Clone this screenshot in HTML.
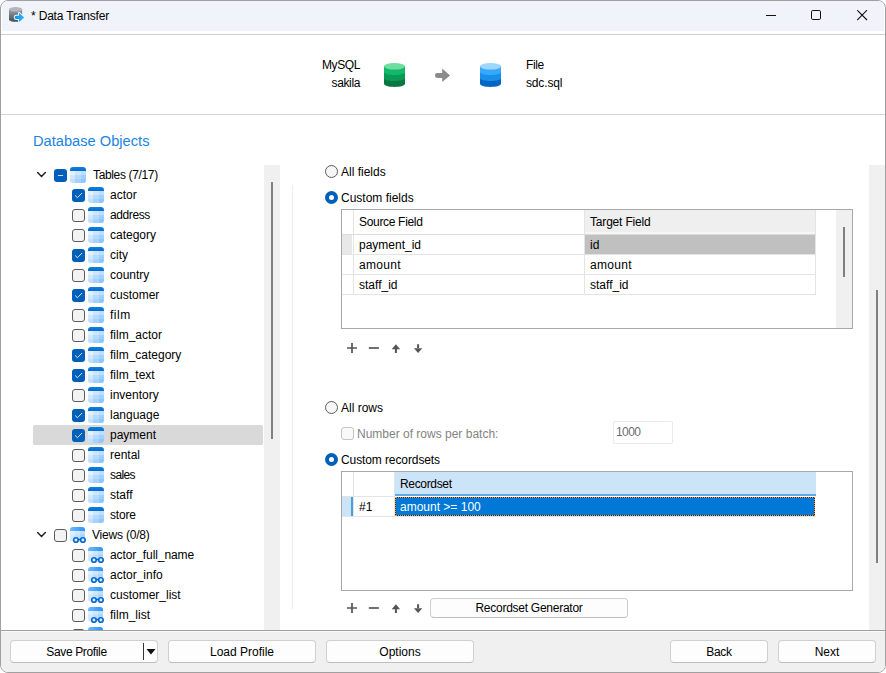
<!DOCTYPE html>
<html><head><meta charset="utf-8"><title>Data Transfer</title>
<style>
html,body{margin:0;padding:0;}
body{width:886px;height:673px;overflow:hidden;background:#fff;font-family:"Liberation Sans",sans-serif;font-size:12px;color:#000;position:relative;}
#win{position:absolute;left:0;top:0;width:884px;height:671px;border:1px solid #a0a0a0;border-radius:8px;overflow:hidden;background:#fff;}
#inner{position:absolute;left:-1px;top:-1px;width:886px;height:673px;}
#inner *{position:absolute;box-sizing:border-box;}
#title{left:2px;top:1px;width:882px;height:30px;background:#f0f3f9;}
.tx{height:20px;line-height:20px;white-space:nowrap;}
.cb{width:13px;height:13px;border:1px solid #5c5c5c;border-radius:3px;background:#f3f3f3;}
.cb.on{border:0;background:#005fb8;}
.cb svg{left:0;top:0;}
.sel{left:33px;width:230px;height:20px;background:#d9d9d9;border-radius:2px;}
.rad{width:13px;height:13px;border:1px solid #5c5c5c;border-radius:50%;background:#f6f6f6;}
.rad.on{border:4px solid #005fb8;background:#fff;}
.btn{height:23px;border:1px solid #d0d0d0;border-radius:4px;background:#fdfdfd;text-align:center;line-height:22px;font-size:12px;border-bottom-color:#bdbdbd;}
.gl{background:#e4e4e4;}
.tool{font-size:14px;color:#444;}
</style></head><body>
<svg width="0" height="0" style="position:absolute">
<defs>
<linearGradient id="hd" x1="0" y1="0" x2="0" y2="1"><stop offset="0" stop-color="#0f80de"/><stop offset="1" stop-color="#066ccc"/></linearGradient>
<clipPath id="rc"><rect x="0" y="0" width="16" height="16" rx="3.2"/></clipPath>
<g id="tbl" clip-path="url(#rc)">
<rect x="0" y="0" width="16" height="16" fill="#e3f1ff"/>
<rect x="5" y="4" width="6" height="12" fill="#cde6ff"/>
<rect x="11" y="4" width="5" height="12" fill="#bcdeff"/>
<rect x="0" y="8" width="5" height="4" fill="#cfe7ff"/>
<rect x="5" y="8" width="6" height="4" fill="#b5daff"/>
<rect x="11" y="8" width="5" height="4" fill="#a0d0ff"/>
<rect x="0" y="12" width="5" height="4" fill="#c0e0ff"/>
<rect x="5" y="12" width="6" height="4" fill="#a5d3ff"/>
<rect x="11" y="12" width="5" height="4" fill="#8cc8ff"/>
<rect x="0" y="0" width="16" height="4" fill="url(#hd)"/>
</g>
<linearGradient id="hv" x1="0" y1="0" x2="1" y2="0"><stop offset="0" stop-color="#6cb8ff"/><stop offset="1" stop-color="#2a92f8"/></linearGradient>
<clipPath id="rv"><rect x="0" y="0" width="15" height="14.5" rx="3"/></clipPath>
<g id="vw">
<g clip-path="url(#rv)">
<rect x="0" y="0" width="15" height="15" fill="#e0f0ff"/>
<rect x="5" y="4" width="5" height="11" fill="#cfe7ff"/>
<rect x="10" y="4" width="5" height="11" fill="#bfdfff"/>
<rect x="0" y="7.5" width="5" height="7" fill="#d3e9ff"/>
<rect x="5" y="7.5" width="5" height="7" fill="#c0e0ff"/>
<rect x="10" y="7.5" width="5" height="7" fill="#aad5ff"/>
<rect x="0" y="0" width="15" height="4" fill="url(#hv)"/>
</g>
<circle cx="5.95" cy="13" r="2.25" fill="#dbeeff" stroke="#0a6cd0" stroke-width="1.7"/>
<circle cx="12.9" cy="13" r="2.25" fill="#dbeeff" stroke="#0a6cd0" stroke-width="1.7"/>
<path d="M8.2 12.5 H10.7" stroke="#0a5cb8" stroke-width="1.3"/>
</g>
</defs></svg>
<div id="win"><div id="inner">
<div id="title"></div>
<!-- title icon -->
<svg style="left:8px;top:6px" width="18" height="18" viewBox="0 0 18 18">
<defs><linearGradient id="cyl" x1="0" y1="0" x2="0" y2="1"><stop offset="0" stop-color="#9da2a8"/><stop offset="0.45" stop-color="#737a81"/><stop offset="1" stop-color="#474d53"/></linearGradient>
<linearGradient id="arw" x1="0" y1="0" x2="1" y2="0"><stop offset="0" stop-color="#0a8eea"/><stop offset="1" stop-color="#34bbff"/></linearGradient></defs>
<path d="M1 3.3 V13.5 C1 14.9 4 15.8 7.6 15.8 S14.2 14.9 14.2 13.5 V3.3 Z" fill="url(#cyl)"/>
<ellipse cx="7.6" cy="3.3" rx="6.6" ry="2.3" fill="#b3b6bb"/>
<path d="M8.3 9.7 H10.9 V6.8 L16.3 11.4 L10.9 16.1 V13 H8.3 A1.65 1.65 0 0 1 8.3 9.7 Z" fill="#f0f3f9" stroke="#f0f3f9" stroke-width="1.8" stroke-linejoin="round"/>
<path d="M8.3 9.7 H10.9 V6.8 L16.3 11.4 L10.9 16.1 V13 H8.3 A1.65 1.65 0 0 1 8.3 9.7 Z" fill="url(#arw)"/>
</svg>
<div class="tx" style="left:31px;top:6px;font-size:12px"><span style="position:static;letter-spacing:-0.18px">* Data Transfer</span></div>
<!-- window controls -->
<svg style="left:766px;top:10px" width="12" height="12" viewBox="0 0 12 12"><path d="M0 5.5 H10" stroke="#111" stroke-width="1"/></svg>
<svg style="left:811px;top:10px" width="12" height="12" viewBox="0 0 12 12"><rect x="0.5" y="0.5" width="9" height="9" rx="1.3" fill="none" stroke="#111" stroke-width="1"/></svg>
<svg style="left:857px;top:10px" width="12" height="12" viewBox="0 0 12 12"><path d="M0.2 0.2 L10 10 M10 0.2 L0.2 10" stroke="#111" stroke-width="1.1"/></svg>
<div style="left:0;top:34px;width:886px;height:1px;background:#cfcfcf"></div>
<!-- header -->
<div class="tx" style="left:260px;top:55px;width:100px;text-align:right;font-size:12px"><span style="position:static;letter-spacing:-0.4px">MySQL</span></div>
<div class="tx" style="left:260px;top:73px;width:100px;text-align:right;font-size:12px"><span style="position:static;letter-spacing:-0.37px">sakila</span></div>
<svg style="left:383px;top:62px" width="23" height="26" viewBox="0 0 23 26">
<path d="M1 4 V21.5 C1 23.6 5.5 24.9 11.5 24.9 S22 23.6 22 21.5 V4 Z" fill="#06783f"/>
<path d="M1 4 V16.2 C1 17.8 5.5 18.9 11.5 18.9 S22 17.8 22 16.2 V4 Z" fill="#0a9a55"/>
<path d="M1 4 V10.2 C1 11.8 5.5 12.9 11.5 12.9 S22 11.8 22 10.2 V4 Z" fill="#12b96a"/>
<ellipse cx="11.5" cy="4.3" rx="10.5" ry="3.3" fill="#6edda0"/>
</svg>
<svg style="left:434px;top:67px" width="17" height="16" viewBox="0 0 17 16"><path d="M3.3 6 H8.2 V1.6 L16 8.5 L8.2 15 V10.9 H3.3 A2.4 2.45 0 0 1 3.3 6 Z" fill="#8c8c8c"/></svg>
<svg style="left:479px;top:62px" width="23" height="26" viewBox="0 0 23 26">
<path d="M1 4 V21.5 C1 23.6 5.5 24.9 11.5 24.9 S22 23.6 22 21.5 V4 Z" fill="#0068c4"/>
<path d="M1 4 V16.2 C1 17.8 5.5 18.9 11.5 18.9 S22 17.8 22 16.2 V4 Z" fill="#1a8fe8"/>
<path d="M1 4 V10.2 C1 11.8 5.5 12.9 11.5 12.9 S22 11.8 22 10.2 V4 Z" fill="#35a8ff"/>
<ellipse cx="11.5" cy="4.3" rx="10.5" ry="3.3" fill="#9dd6ff"/>
</svg>
<div class="tx" style="left:526px;top:55px"><span style="position:static;letter-spacing:-0.35px">File</span></div>
<div class="tx" style="left:526px;top:73px"><span style="position:static;letter-spacing:-0.15px">sdc.sql</span></div>
<div style="left:0;top:114px;width:886px;height:1px;background:#d4d4d4"></div>
<div class="tx" style="left:33px;top:129px;font-size:14.67px;color:#1c84e0;height:24px;line-height:24px">Database Objects</div>
<!-- tree -->
<div id="tree" style="left:0;top:165px;width:265px;height:465px;overflow:hidden"><div style="left:0;top:-165px;width:265px;height:700px">
<svg class="ic" style="left:37px;top:172px" width="10" height="6" viewBox="0 0 10 6"><path d="M0.6 0.6 L4.5 4.5 L8.4 0.6" fill="none" stroke="#1a1a1a" stroke-width="1.4" stroke-linecap="round" stroke-linejoin="round"/></svg><div class="cb on" style="left:54px;top:169px"><svg width="13" height="13" viewBox="0 0 13 13"><path d="M3.9 6.5 H9.1" fill="none" stroke="#fff" stroke-opacity=".8" stroke-width="1.1"/></svg></div><svg class="ic" style="left:70px;top:167px" width="16" height="16" viewBox="0 0 16 16"><use href="#tbl"/></svg><div class="tx" style="left:93px;top:165px"><span style="position:static;letter-spacing:-0.35px">Tables (7/17)</span></div>
<div class="cb on" style="left:72px;top:189px"><svg width="13" height="13" viewBox="0 0 13 13"><path d="M3.3 6.7 L5.4 8.7 L9.8 4.3" fill="none" stroke="#fff" stroke-opacity=".85" stroke-width="1" stroke-linecap="round" stroke-linejoin="round"/></svg></div><svg class="ic" style="left:88px;top:187px" width="16" height="16" viewBox="0 0 16 16"><use href="#tbl"/></svg><div class="tx" style="left:110px;top:185px">actor</div>
<div class="cb" style="left:72px;top:209px"></div><svg class="ic" style="left:88px;top:207px" width="16" height="16" viewBox="0 0 16 16"><use href="#tbl"/></svg><div class="tx" style="left:110px;top:205px"><span style="position:static;letter-spacing:-0.4px">address</span></div>
<div class="cb" style="left:72px;top:229px"></div><svg class="ic" style="left:88px;top:227px" width="16" height="16" viewBox="0 0 16 16"><use href="#tbl"/></svg><div class="tx" style="left:110px;top:225px">category</div>
<div class="cb on" style="left:72px;top:249px"><svg width="13" height="13" viewBox="0 0 13 13"><path d="M3.3 6.7 L5.4 8.7 L9.8 4.3" fill="none" stroke="#fff" stroke-opacity=".85" stroke-width="1" stroke-linecap="round" stroke-linejoin="round"/></svg></div><svg class="ic" style="left:88px;top:247px" width="16" height="16" viewBox="0 0 16 16"><use href="#tbl"/></svg><div class="tx" style="left:110px;top:245px">city</div>
<div class="cb" style="left:72px;top:269px"></div><svg class="ic" style="left:88px;top:267px" width="16" height="16" viewBox="0 0 16 16"><use href="#tbl"/></svg><div class="tx" style="left:110px;top:265px">country</div>
<div class="cb on" style="left:72px;top:289px"><svg width="13" height="13" viewBox="0 0 13 13"><path d="M3.3 6.7 L5.4 8.7 L9.8 4.3" fill="none" stroke="#fff" stroke-opacity=".85" stroke-width="1" stroke-linecap="round" stroke-linejoin="round"/></svg></div><svg class="ic" style="left:88px;top:287px" width="16" height="16" viewBox="0 0 16 16"><use href="#tbl"/></svg><div class="tx" style="left:110px;top:285px">customer</div>
<div class="cb" style="left:72px;top:309px"></div><svg class="ic" style="left:88px;top:307px" width="16" height="16" viewBox="0 0 16 16"><use href="#tbl"/></svg><div class="tx" style="left:110px;top:305px"><span style="position:static;letter-spacing:0.5px">film</span></div>
<div class="cb" style="left:72px;top:329px"></div><svg class="ic" style="left:88px;top:327px" width="16" height="16" viewBox="0 0 16 16"><use href="#tbl"/></svg><div class="tx" style="left:110px;top:325px">film_actor</div>
<div class="cb on" style="left:72px;top:349px"><svg width="13" height="13" viewBox="0 0 13 13"><path d="M3.3 6.7 L5.4 8.7 L9.8 4.3" fill="none" stroke="#fff" stroke-opacity=".85" stroke-width="1" stroke-linecap="round" stroke-linejoin="round"/></svg></div><svg class="ic" style="left:88px;top:347px" width="16" height="16" viewBox="0 0 16 16"><use href="#tbl"/></svg><div class="tx" style="left:110px;top:345px">film_category</div>
<div class="cb on" style="left:72px;top:369px"><svg width="13" height="13" viewBox="0 0 13 13"><path d="M3.3 6.7 L5.4 8.7 L9.8 4.3" fill="none" stroke="#fff" stroke-opacity=".85" stroke-width="1" stroke-linecap="round" stroke-linejoin="round"/></svg></div><svg class="ic" style="left:88px;top:367px" width="16" height="16" viewBox="0 0 16 16"><use href="#tbl"/></svg><div class="tx" style="left:110px;top:365px">film_text</div>
<div class="cb" style="left:72px;top:389px"></div><svg class="ic" style="left:88px;top:387px" width="16" height="16" viewBox="0 0 16 16"><use href="#tbl"/></svg><div class="tx" style="left:110px;top:385px">inventory</div>
<div class="cb on" style="left:72px;top:409px"><svg width="13" height="13" viewBox="0 0 13 13"><path d="M3.3 6.7 L5.4 8.7 L9.8 4.3" fill="none" stroke="#fff" stroke-opacity=".85" stroke-width="1" stroke-linecap="round" stroke-linejoin="round"/></svg></div><svg class="ic" style="left:88px;top:407px" width="16" height="16" viewBox="0 0 16 16"><use href="#tbl"/></svg><div class="tx" style="left:110px;top:405px">language</div>
<div class="sel" style="top:425px"></div>
<div class="cb on" style="left:72px;top:429px"><svg width="13" height="13" viewBox="0 0 13 13"><path d="M3.3 6.7 L5.4 8.7 L9.8 4.3" fill="none" stroke="#fff" stroke-opacity=".85" stroke-width="1" stroke-linecap="round" stroke-linejoin="round"/></svg></div><svg class="ic" style="left:88px;top:427px" width="16" height="16" viewBox="0 0 16 16"><use href="#tbl"/></svg><div class="tx" style="left:110px;top:425px">payment</div>
<div class="cb" style="left:72px;top:449px"></div><svg class="ic" style="left:88px;top:447px" width="16" height="16" viewBox="0 0 16 16"><use href="#tbl"/></svg><div class="tx" style="left:110px;top:445px">rental</div>
<div class="cb" style="left:72px;top:469px"></div><svg class="ic" style="left:88px;top:467px" width="16" height="16" viewBox="0 0 16 16"><use href="#tbl"/></svg><div class="tx" style="left:110px;top:465px"><span style="position:static;letter-spacing:-0.6px">sales</span></div>
<div class="cb" style="left:72px;top:489px"></div><svg class="ic" style="left:88px;top:487px" width="16" height="16" viewBox="0 0 16 16"><use href="#tbl"/></svg><div class="tx" style="left:110px;top:485px">staff</div>
<div class="cb" style="left:72px;top:509px"></div><svg class="ic" style="left:88px;top:507px" width="16" height="16" viewBox="0 0 16 16"><use href="#tbl"/></svg><div class="tx" style="left:110px;top:505px"><span style="position:static;letter-spacing:-0.2px">store</span></div>
<svg class="ic" style="left:37px;top:532px" width="10" height="6" viewBox="0 0 10 6"><path d="M0.6 0.6 L4.5 4.5 L8.4 0.6" fill="none" stroke="#1a1a1a" stroke-width="1.4" stroke-linecap="round" stroke-linejoin="round"/></svg><div class="cb" style="left:54px;top:529px"></div><svg class="ic" style="left:70px;top:527px" width="18" height="18" viewBox="0 0 18 18"><use href="#vw"/></svg><div class="tx" style="left:92px;top:525px"><span style="position:static;letter-spacing:-0.2px">Views (0/8)</span></div>
<div class="cb" style="left:72px;top:549px"></div><svg class="ic" style="left:88px;top:547px" width="18" height="18" viewBox="0 0 18 18"><use href="#vw"/></svg><div class="tx" style="left:110px;top:545px"><span style="position:static;letter-spacing:-0.09px">actor_full_name</span></div>
<div class="cb" style="left:72px;top:569px"></div><svg class="ic" style="left:88px;top:567px" width="18" height="18" viewBox="0 0 18 18"><use href="#vw"/></svg><div class="tx" style="left:110px;top:565px">actor_info</div>
<div class="cb" style="left:72px;top:589px"></div><svg class="ic" style="left:88px;top:587px" width="18" height="18" viewBox="0 0 18 18"><use href="#vw"/></svg><div class="tx" style="left:110px;top:585px">customer_list</div>
<div class="cb" style="left:72px;top:609px"></div><svg class="ic" style="left:88px;top:607px" width="18" height="18" viewBox="0 0 18 18"><use href="#vw"/></svg><div class="tx" style="left:110px;top:605px">film_list</div>
<div class="cb" style="left:72px;top:629px"></div><svg class="ic" style="left:88px;top:627px" width="18" height="18" viewBox="0 0 18 18"><use href="#vw"/></svg>
</div></div>
<div style="left:264px;top:165px;width:16px;height:465px;background:#f0f0f0"></div>
<div style="left:271px;top:182px;width:2px;height:257px;background:#808080"></div>
<div style="left:292px;top:185px;width:1px;height:424px;background:#ececec"></div>
<!-- right pane -->
<div style="left:869px;top:165px;width:16px;height:465px;background:#f0f0f0"></div>
<div style="left:876px;top:290px;width:2px;height:273px;background:#808080"></div>

<div class="rad" style="left:325px;top:165px"></div>
<div class="tx" style="left:341px;top:162px">All fields</div>
<div class="rad on" style="left:325px;top:191px"></div>
<div class="tx" style="left:341px;top:188px">Custom fields</div>
<!-- grid1 -->
<div style="left:341px;top:209px;width:512px;height:120px;border:1px solid #a8a8a8;background:#fff"></div>
<div style="left:585px;top:210px;width:230px;height:22px;background:#efefef"></div>
<div style="left:585px;top:232px;width:230px;height:2px;background:#f6f6f6"></div>
<div style="left:342px;top:235px;width:10px;height:19px;background:#e8e8e8"></div>
<div style="left:585px;top:235px;width:230px;height:19px;background:#c0c0c0"></div>
<div class="gl" style="left:353px;top:210px;width:1px;height:85px"></div>
<div class="gl" style="left:584px;top:210px;width:1px;height:85px"></div>
<div class="gl" style="left:815px;top:210px;width:1px;height:85px"></div>
<div class="gl" style="left:342px;top:234px;width:474px;height:1px;background:#dcdcdc"></div>
<div class="gl" style="left:342px;top:254px;width:474px;height:1px"></div>
<div class="gl" style="left:342px;top:274px;width:474px;height:1px"></div>
<div class="gl" style="left:342px;top:294px;width:474px;height:1px"></div>
<div class="tx" style="left:359px;top:212px"><span style="position:static;letter-spacing:-0.32px">Source Field</span></div>
<div class="tx" style="left:590px;top:212px"><span style="position:static;letter-spacing:-0.18px">Target Field</span></div>
<div class="tx" style="left:359px;top:235px">payment_id</div>
<div class="tx" style="left:590px;top:235px">id</div>
<div class="tx" style="left:359px;top:255px"><span style="position:static;letter-spacing:0.3px">amount</span></div>
<div class="tx" style="left:590px;top:255px"><span style="position:static;letter-spacing:0.3px">amount</span></div>
<div class="tx" style="left:359px;top:275px">staff_id</div>
<div class="tx" style="left:590px;top:275px">staff_id</div>
<div style="left:836px;top:210px;width:16px;height:118px;background:#f0f0f0"></div>
<div style="left:843px;top:227px;width:2px;height:50px;background:#808080"></div>
<!-- toolbar1 -->
<svg style="left:346px;top:342px" width="80" height="12" viewBox="0 0 80 12">
<path d="M1 6 H11 M6 1 V11" stroke="#555" stroke-width="1.7" fill="none"/>
<path d="M22.8 6 H32.9" stroke="#555" stroke-width="1.7" fill="none"/>
<path d="M45.7 7.2 L49.9 2.2 L54.1 7.2 Z M48.9 7 H50.9 V10.9 H48.9 Z" fill="#555"/>
<path d="M67.9 6.3 L72.1 11.1 L76.3 6.3 Z M71.1 2.3 H73.1 V6.5 H71.1 Z" fill="#555"/>
</svg>

<div class="rad" style="left:325px;top:401px"></div>
<div class="tx" style="left:341px;top:398px">All rows</div>
<div class="cb" style="left:341px;top:427px;border-color:#c4c4c4;background:#f9f9f9"></div>
<div class="tx" style="left:357px;top:424px;color:#838383">Number of rows per batch:</div>
<div style="left:613px;top:421px;width:60px;height:23px;border:1px solid #e9e9e9;border-radius:2px;background:#fff"></div>
<div class="tx" style="left:616px;top:422px;color:#6d6d6d;letter-spacing:-0.6px">1000</div>
<div class="rad on" style="left:325px;top:453px"></div>
<div class="tx" style="left:341px;top:450px"><span style="position:static;letter-spacing:-0.1px">Custom recordsets</span></div>
<!-- grid2 -->
<div style="left:341px;top:471px;width:512px;height:120px;border:1px solid #a8a8a8;background:#fff"></div>
<div style="left:395px;top:472px;width:421px;height:22px;background:#cce4f7"></div>
<div style="left:395px;top:494px;width:421px;height:2px;background:#5fa9e6"></div>
<div class="gl" style="left:353px;top:472px;width:1px;height:45px"></div>
<div class="gl" style="left:394px;top:472px;width:1px;height:45px"></div>
<div class="gl" style="left:342px;top:496px;width:53px;height:1px"></div>
<div class="gl" style="left:342px;top:516px;width:474px;height:1px"></div>
<div style="left:342px;top:497px;width:9px;height:19px;background:#cce4f7"></div>
<div style="left:351px;top:497px;width:2px;height:19px;background:#4a9de0"></div>
<div style="left:395px;top:497px;width:420px;height:19px;background:linear-gradient(#0078d7,#0078d7) padding-box,#2a2a2a border-box;border:1px dotted #e89a50"></div>
<div class="tx" style="left:400px;top:474px"><span style="position:static;letter-spacing:-0.34px">Recordset</span></div>
<div class="tx" style="left:359px;top:497px">#1</div>
<div class="tx" style="left:400px;top:497px;color:#fff">amount &gt;= 100</div>
<!-- toolbar2 -->
<svg style="left:346px;top:602px" width="80" height="12" viewBox="0 0 80 12">
<path d="M1 6 H11 M6 1 V11" stroke="#555" stroke-width="1.7" fill="none"/>
<path d="M22.8 6 H32.9" stroke="#555" stroke-width="1.7" fill="none"/>
<path d="M45.7 7.2 L49.9 2.2 L54.1 7.2 Z M48.9 7 H50.9 V10.9 H48.9 Z" fill="#555"/>
<path d="M67.9 6.3 L72.1 11.1 L76.3 6.3 Z M71.1 2.3 H73.1 V6.5 H71.1 Z" fill="#555"/>
</svg>
<div class="btn" style="left:430px;top:598px;width:198px;height:20px;line-height:19px"><span style="position:static;letter-spacing:-0.26px">Recordset Generator</span></div>
<!-- bottom -->
<div style="left:0;top:630px;width:886px;height:43px;background:#f0f0f0;border-top:1px solid #a0a0a0"></div>
<div style="left:1px;top:631px;width:884px;height:1px;background:#fafafa"></div>
<div class="btn" style="left:10px;top:640px;width:148px"></div>
<div class="tx" style="left:10px;top:642px;width:133px;text-align:center"><span style="position:static;letter-spacing:-0.35px">Save Profile</span></div>
<div style="left:143px;top:643px;width:1px;height:17px;background:#333"></div>
<svg style="left:146px;top:649px" width="10" height="6" viewBox="0 0 10 6"><path d="M0.5 0 H9.5 L5 5.5 Z" fill="#111"/></svg>
<div class="btn" style="left:168px;top:640px;width:148px">Load Profile</div>
<div class="btn" style="left:326px;top:640px;width:148px">Options</div>
<div class="btn" style="left:670px;top:640px;width:98px"><span style="position:static;letter-spacing:-0.3px">Back</span></div>
<div class="btn" style="left:778px;top:640px;width:98px">Next</div>
</div></div>
</body></html>
